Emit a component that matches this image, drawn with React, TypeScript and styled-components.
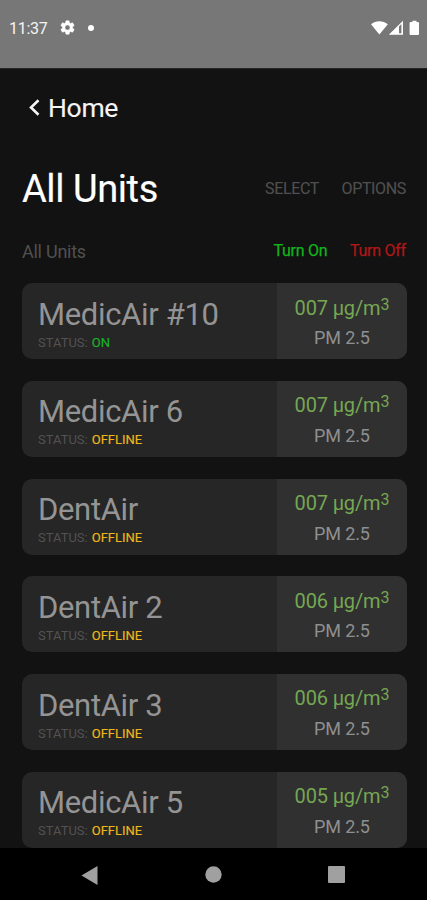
import React from 'react';
import styled, { createGlobalStyle } from 'styled-components';

const GlobalStyle = createGlobalStyle`
  *, *::before, *::after { box-sizing: border-box; }
  body {
    margin: 0;
    background: #121212;
    font-family: Roboto, "Liberation Sans", sans-serif;
    overflow: hidden;
  }
`;

const Screen = styled.div`
  display: flex;
  flex-direction: column;
  width: 427px;
  height: 900px;
  background: #121212;
  overflow: hidden;
  white-space: nowrap;
`;

const StatusBar = styled.header`
  flex: none;
  display: flex;
  justify-content: space-between;
  height: 69px;
  padding: 18px 7px 0 9px;
  background: #777;
  border-bottom: 1px solid #252525;
  color: #f4f4f4;
`;

const StatusGroup = styled.div<{ $gap: number }>`
  display: flex;
  align-items: center;
  height: 19px;
  gap: ${(p) => p.$gap}px;
`;

const Clock = styled.span`
  font-size: 16px;
  line-height: 19px;
  width: 38px;
  letter-spacing: -0.3px;
  padding-top: 1px;
`;

const Dot = styled.span`
  width: 6px;
  height: 6px;
  border-radius: 50%;
  background: #fff;
`;

const Content = styled.main`
  flex: 1;
  min-height: 0;
  padding: 0 20.5px 0 22px;
  overflow: hidden;
`;

const BackLink = styled.nav`
  display: flex;
  align-items: center;
  height: 32px;
  margin-top: 23px;
  padding-left: 7px;
  gap: 8px;
  color: #f4f4f4;
  font-size: 26.5px;
  line-height: 32px;
  letter-spacing: -0.3px;
  -webkit-text-stroke: 0.12px #f4f4f4;
`;

const TitleRow = styled.div`
  display: flex;
  justify-content: space-between;
  align-items: center;
  height: 44px;
  margin-top: 43px;
`;

const Title = styled.h1`
  margin: 0;
  color: #fff;
  font-size: 38px;
  font-weight: 400;
  line-height: 44px;
  letter-spacing: -0.42px;
  -webkit-text-stroke: 0.15px #fff;
`;

const Actions = styled.div`
  display: flex;
  gap: 22.5px;
  padding-right: 0.6px;
`;

const Action = styled.span`
  color: #4f4f4f;
  font-size: 16px;
  line-height: 20px;
  letter-spacing: -0.36px;
  -webkit-text-stroke: 0.15px #4f4f4f;
`;

const FilterRow = styled.div`
  display: flex;
  justify-content: space-between;
  height: 22px;
  margin-top: 30px;
`;

const FilterLabel = styled.span`
  color: #505050;
  font-size: 18px;
  line-height: 22px;
  letter-spacing: -0.25px;
`;

const PowerAction = styled.span<{ $color: string }>`
  color: ${(p) => p.$color};
  font-size: 16px;
  line-height: 20px;
  letter-spacing: -0.25px;
  -webkit-text-stroke: 0.25px ${(p) => p.$color};
`;

const UnitList = styled.section`
  display: flex;
  flex-direction: column;
  gap: 21.7px;
  margin-top: 20.2px;
`;

const UnitCard = styled.article`
  flex: none;
  display: grid;
  grid-template-columns: 255.3px 1fr;
  height: 76px;
  border-radius: 10px;
  overflow: hidden;
  background: #262626;
`;

const UnitInfo = styled.div`
  padding: 13.6px 0 0 16px;
`;

const UnitName = styled.div`
  color: #949494;
  font-size: 31px;
  line-height: 36px;
  letter-spacing: -0.34px;
`;

const UnitStatus = styled.div`
  color: #525252;
  font-size: 13px;
  line-height: 19px;
`;

const StatusValue = styled.span<{ $on: boolean }>`
  color: ${(p) => (p.$on ? '#18b526' : '#eeb81c')};
  -webkit-text-stroke: 0.15px ${(p) => (p.$on ? '#18b526' : '#eeb81c')};
  margin-left: 0.8px;
`;

const Reading = styled.div`
  background: #303030;
  padding-top: 12.4px;
  text-align: center;
`;

const ReadingValue = styled.div`
  color: #75a753;
  font-size: 20px;
  line-height: 24px;
  letter-spacing: -0.15px;
`;

const Cubed = styled.span`
  display: inline-block;
  font-size: 16px;
  line-height: 16px;
  transform: translateY(-5px);
`;

const ReadingLabel = styled.div`
  color: #8f8f8f;
  font-size: 18px;
  line-height: 24px;
  letter-spacing: -0.15px;
  margin-top: 6.6px;
`;

const NavBar = styled.footer`
  flex: none;
  display: flex;
  justify-content: space-between;
  height: 52px;
  padding: 17.5px 82px 0 81px;
  background: #000;
`;

const Icon = styled.svg`
  display: block;
  flex: none;
`;

const units = [
  { name: 'MedicAir #10', on: true, value: '007' },
  { name: 'MedicAir 6', on: false, value: '007' },
  { name: 'DentAir', on: false, value: '007' },
  { name: 'DentAir 2', on: false, value: '006' },
  { name: 'DentAir 3', on: false, value: '006' },
  { name: 'MedicAir 5', on: false, value: '005' },
];

export default function App() {
  return (
    <>
      <GlobalStyle />
      <Screen>
        <StatusBar>
          <StatusGroup $gap={12}>
            <Clock>11:37</Clock>
            <Icon width="17" height="17" viewBox="0 0 24 24" fill="#fff" stroke="#fff" strokeWidth="0.7">
              <path d="M19.14 12.94c.04-.3.06-.61.06-.94s-.02-.64-.07-.94l2.03-1.58a.49.49 0 0 0 .12-.61l-1.92-3.32a.49.49 0 0 0-.59-.22l-2.39.96a7 7 0 0 0-1.62-.94l-.36-2.54a.48.48 0 0 0-.48-.41h-3.84a.48.48 0 0 0-.47.41l-.36 2.54a7.3 7.3 0 0 0-1.62.94l-2.39-.96a.48.48 0 0 0-.59.22L2.74 8.87a.48.48 0 0 0 .12.61l2.03 1.58a6 6 0 0 0 0 1.88l-2.03 1.58a.49.49 0 0 0-.12.61l1.92 3.32c.12.22.37.29.59.22l2.39-.96c.5.38 1.03.7 1.62.94l.36 2.54c.05.24.24.41.48.41h3.84c.24 0 .44-.17.47-.41l.36-2.54a7 7 0 0 0 1.62-.94l2.39.96c.22.08.47 0 .59-.22l1.92-3.32a.48.48 0 0 0-.12-.61zM12 15.6a3.6 3.6 0 1 1 0-7.2 3.6 3.6 0 0 1 0 7.2z" />
            </Icon>
            <Dot />
          </StatusGroup>
          <StatusGroup $gap={0}>
            <Icon width="49" height="16" viewBox="0 0 49 16" fill="#fff">
              <path d="M0 4.2C4.6.3 12 .3 16.8 4.2L8.4 14.6z" />
              <path d="M17.8 14.8 32 .8v14H17.8zM28 6.4v6.9h2.4V4z" fillRule="evenodd" />
              <path d="M39.5 2h2V.7h4V2h1.6c.5 0 .9.4.9.9V14c0 .5-.4.9-.9.9h-7.6c-.5 0-.9-.4-.9-.9V2.9c0-.5.4-.9.9-.9z" />
            </Icon>
          </StatusGroup>
        </StatusBar>
        <Content>
          <BackLink>
            <Icon width="11" height="18" viewBox="0 0 11 18" fill="none" stroke="#f4f4f4" strokeWidth="2.6">
              <path d="M9.5 1.2 2 8.5l7.5 7.3" />
            </Icon>
            <span>Home</span>
          </BackLink>
          <TitleRow>
            <Title>All Units</Title>
            <Actions>
              <Action>SELECT</Action>
              <Action>OPTIONS</Action>
            </Actions>
          </TitleRow>
          <FilterRow>
            <FilterLabel>All Units</FilterLabel>
            <Actions>
              <PowerAction $color="#10b51c">Turn On</PowerAction>
              <PowerAction $color="#b01717">Turn Off</PowerAction>
            </Actions>
          </FilterRow>
          <UnitList>
            {units.map((unit) => (
              <UnitCard key={unit.name}>
                <UnitInfo>
                  <UnitName>{unit.name}</UnitName>
                  <UnitStatus>
                    STATUS: <StatusValue $on={unit.on}>{unit.on ? 'ON' : 'OFFLINE'}</StatusValue>
                  </UnitStatus>
                </UnitInfo>
                <Reading>
                  <ReadingValue>
                    {unit.value} µg/m<Cubed>3</Cubed>
                  </ReadingValue>
                  <ReadingLabel>PM 2.5</ReadingLabel>
                </Reading>
              </UnitCard>
            ))}
          </UnitList>
        </Content>
        <NavBar>
          <Icon width="17" height="19" viewBox="0 0 17 19" fill="#a0a0a0">
            <path d="M.5 9.5 16.5 0v19z" />
          </Icon>
          <Icon width="17" height="17" viewBox="0 0 17 17" fill="#a0a0a0">
            <circle cx="8.5" cy="8.5" r="8.2" />
          </Icon>
          <Icon width="17" height="17" viewBox="0 0 17 17" fill="#a0a0a0">
            <rect width="17" height="17" rx="1" />
          </Icon>
        </NavBar>
      </Screen>
    </>
  );
}
